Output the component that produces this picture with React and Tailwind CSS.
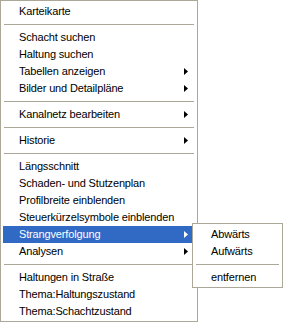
import React from "react";

const Arrow = ({ white }) => (
  <svg width="4" height="7" viewBox="0 0 4 7" className="block">
    <polygon points="0,0 4,3.5 0,7" fill={white ? "#ffffff" : "#000000"} />
  </svg>
);

const Item = ({ label, sub, active }) => (
  <div
    className={
      "h-[17px] flex items-center justify-between pl-4 pr-[7px] whitespace-nowrap " +
      (active ? "bg-[#316ac5] text-white" : "text-black")
    }
  >
    <span>{label}</span>
    {sub ? <Arrow white={active} /> : null}
  </div>
);

const Sep = () => (
  <div className="h-[9px] flex items-center px-px">
    <div className="h-px w-full bg-[#aca899]" />
  </div>
);

export default function App() {
  return (
    <div className="relative w-[285px] h-[323px] bg-white font-['Liberation_Sans',Arial,sans-serif] text-[11px] leading-none tracking-[-0.15px]">
      <div className="w-[198px] h-[322px] border border-[#aca899] bg-white pt-[2px] pb-[1px] px-[2px] flex flex-col">
        <Item label="Karteikarte" />
        <Sep />
        <Item label="Schacht suchen" />
        <Item label="Haltung suchen" />
        <Item label="Tabellen anzeigen" sub />
        <Item label="Bilder und Detailpläne" sub />
        <Sep />
        <Item label="Kanalnetz bearbeiten" sub />
        <Sep />
        <Item label="Historie" sub />
        <Sep />
        <Item label="Längsschnitt" />
        <Item label="Schaden- und Stutzenplan" />
        <Item label="Profilbreite einblenden" />
        <Item label="Steuerkürzelsymbole einblenden" />
        <Item label="Strangverfolgung" sub active />
        <Item label="Analysen" sub />
        <Sep />
        <Item label="Haltungen in Straße" />
        <Item label="Thema:Haltungszustand" />
        <Item label="Thema:Schachtzustand" />
      </div>
      <div className="absolute left-[192px] top-[223px] w-[91px] h-[65px] border border-[#aca899] bg-white pt-[2px] pb-[1px] px-[2px] flex flex-col">
        <Item label="Abwärts" />
        <Item label="Aufwärts" />
        <Sep />
        <Item label="entfernen" />
      </div>
    </div>
  );
}
